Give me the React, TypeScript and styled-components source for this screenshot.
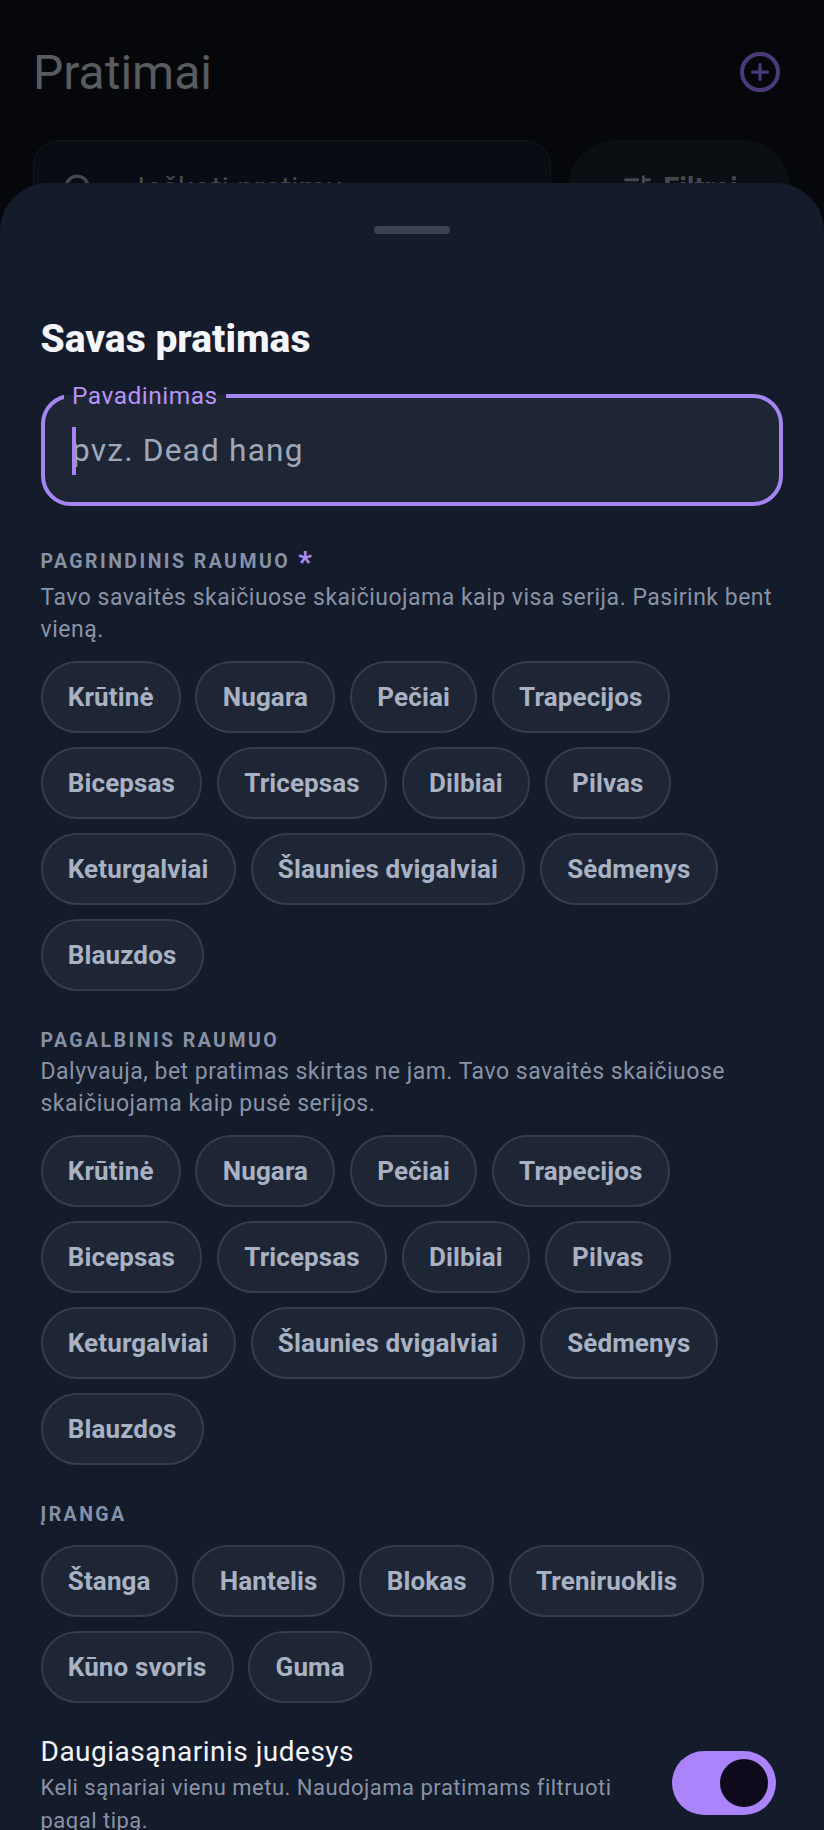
import React from 'react';
import styled, { createGlobalStyle } from 'styled-components';
import { Plus, Search } from 'lucide-react';
import { MdTune } from 'react-icons/md';

const muscles = [
  'Krūtinė',
  'Nugara',
  'Pečiai',
  'Trapecijos',
  'Bicepsas',
  'Tricepsas',
  'Dilbiai',
  'Pilvas',
  'Keturgalviai',
  'Šlaunies dvigalviai',
  'Sėdmenys',
  'Blauzdos',
];

const equipment = ['Štanga', 'Hantelis', 'Blokas', 'Treniruoklis', 'Kūno svoris', 'Guma'];

const GlobalStyle = createGlobalStyle`
  html, body {
    margin: 0;
    padding: 0;
    background: #06070a;
  }
  * {
    box-sizing: border-box;
  }
`;

const Screen = styled.div`
  position: relative;
  width: 824px;
  height: 1830px;
  overflow: hidden;
  background: #06070a;
  font-family: Roboto, 'Noto Sans', sans-serif;
`;

const Backdrop = styled.div`
  padding: 42px 32px 0 33px;
`;

const Header = styled.div`
  display: flex;
  justify-content: space-between;
  align-items: center;
  height: 60px;
  margin-bottom: 38px;
`;

const PageTitle = styled.h1`
  margin: 0;
  font-size: 48px;
  font-weight: 400;
  color: #5a5b5f;
`;

const AddButton = styled.div`
  display: flex;
  align-items: center;
  justify-content: center;
  width: 40px;
  height: 40px;
  margin-right: 12px;
  border: 4px solid #4a3a7c;
  border-radius: 50%;
  color: #4a3a7c;
`;

const SearchRow = styled.div`
  display: flex;
  gap: 17px;
`;

const SearchBox = styled.div`
  display: flex;
  align-items: center;
  gap: 42px;
  width: 518px;
  height: 96px;
  padding: 0 28px;
  border: 1px solid #12151c;
  border-radius: 26px;
  background: #090c12;
  color: #45474d;
  font-size: 31px;
  white-space: nowrap;
`;

const FilterButton = styled.div`
  display: flex;
  align-items: center;
  justify-content: center;
  gap: 8px;
  width: 222px;
  height: 96px;
  border-radius: 48px;
  background: #0b0e13;
  color: #45474d;
  font-size: 29px;
  font-weight: 700;
`;

const Sheet = styled.div`
  position: absolute;
  top: 183px;
  left: 0;
  right: 0;
  bottom: 0;
  padding: 43px 41px 0 40.5px;
  border-radius: 48px 48px 0 0;
  background: #141b2b;
`;

const Handle = styled.div`
  width: 76px;
  height: 8px;
  margin: 0 auto 83px;
  border-radius: 4px;
  background: #3a4150;
`;

const SheetTitle = styled.h2`
  margin: 0 0 33px;
  font-size: 39px;
  line-height: 44px;
  font-weight: 800;
  color: #f4f6fc;
`;

const Field = styled.div`
  position: relative;
  height: 112px;
  padding: 29px 27.5px 0;
  margin-bottom: 40px;
  border: 4px solid #a585f0;
  border-radius: 30px;
  background: #1e2636;
`;

const FieldLabel = styled.span`
  position: absolute;
  top: -16px;
  left: 19.5px;
  padding: 0 8px;
  font-size: 24.5px;
  line-height: 28px;
  letter-spacing: 0.5px;
  color: #b794f6;
  background: linear-gradient(to bottom, #141b2b 45%, #1e2636 45%);
`;

const Placeholder = styled.div`
  position: relative;
  font-size: 31.6px;
  line-height: 48px;
  letter-spacing: 1.2px;
  color: #a0a8b8;
`;

const Caret = styled.span`
  position: absolute;
  top: 0;
  left: 0;
  width: 4px;
  height: 48px;
  background: #a585f0;
`;

const SectionLabel = styled.div<{ $mb?: number }>`
  display: flex;
  align-items: flex-start;
  gap: 8px;
  min-height: 31px;
  padding-top: 1px;
  margin-bottom: ${(p) => p.$mb ?? 0}px;
  font-size: 19.5px;
  line-height: 30px;
  font-weight: 700;
  letter-spacing: 2.45px;
  color: #8791a6;
`;

const Required = styled.span`
  height: 35px;
  font-size: 30px;
  line-height: 30px;
  color: #a98cf6;
`;

const Hint = styled.p`
  margin: 0;
  font-size: 23px;
  line-height: 32px;
  letter-spacing: 0.5px;
  color: #8a93a6;
`;

const ToggleHint = styled(Hint)`
  font-size: 22px;
  line-height: 33px;
`;

const Chips = styled.div<{ $mb: number }>`
  display: flex;
  flex-wrap: wrap;
  gap: 14px 14.6px;
  margin: 15px 0 ${(p) => p.$mb}px;
`;

const Chip = styled.div`
  display: flex;
  align-items: center;
  height: 72px;
  padding: 0 25.3px;
  border: 2px solid #353d4d;
  border-radius: 36px;
  background: #1e2636;
  font-size: 26px;
  font-weight: 700;
  letter-spacing: 0.12px;
  color: #a9b2c3;
`;

const ToggleRow = styled.div`
  display: flex;
  align-items: center;
  justify-content: space-between;
`;

const ToggleText = styled.div`
  width: 590px;
`;

const ToggleTitle = styled.div`
  font-size: 28px;
  line-height: 38px;
  letter-spacing: 0.5px;
  color: #f4f6fc;
`;

const Toggle = styled.div`
  display: flex;
  align-items: center;
  justify-content: flex-end;
  width: 104px;
  height: 64px;
  margin: 0 7px 4px 0;
  padding-right: 8px;
  border-radius: 32px;
  background: #ab84fb;
`;

const Thumb = styled.div`
  width: 48px;
  height: 48px;
  border-radius: 50%;
  background: #0e0a1c;
`;

const ChipList: React.FC<{ items: string[]; mb: number }> = ({ items, mb }) => (
  <Chips $mb={mb}>
    {items.map((item) => (
      <Chip key={item}>{item}</Chip>
    ))}
  </Chips>
);

export default function App() {
  return (
    <Screen>
      <GlobalStyle />
      <Backdrop>
        <Header>
          <PageTitle>Pratimai</PageTitle>
          <AddButton>
            <Plus size={26} strokeWidth={3} />
          </AddButton>
        </Header>
        <SearchRow>
          <SearchBox>
            <Search size={33} strokeWidth={2.4} />
            Ieškoti pratimų...
          </SearchBox>
          <FilterButton>
            <MdTune size={35} />
            Filtrai
          </FilterButton>
        </SearchRow>
      </Backdrop>
      <Sheet>
        <Handle />
        <SheetTitle>Savas pratimas</SheetTitle>
        <Field>
          <FieldLabel>Pavadinimas</FieldLabel>
          <Placeholder>
            <Caret />
            pvz. Dead hang
          </Placeholder>
        </Field>
        <SectionLabel>
          PAGRINDINIS RAUMUO <Required>*</Required>
        </SectionLabel>
        <Hint>Tavo savaitės skaičiuose skaičiuojama kaip visa serija. Pasirink bent vieną.</Hint>
        <ChipList items={muscles} mb={34} />
        <SectionLabel>PAGALBINIS RAUMUO</SectionLabel>
        <Hint>Dalyvauja, bet pratimas skirtas ne jam. Tavo savaitės skaičiuose skaičiuojama kaip pusė serijos.</Hint>
        <ChipList items={muscles} mb={34} />
        <SectionLabel $mb={2}>ĮRANGA</SectionLabel>
        <ChipList items={equipment} mb={30} />
        <ToggleRow>
          <ToggleText>
            <ToggleTitle>Daugiasąnarinis judesys</ToggleTitle>
            <ToggleHint>Keli sąnariai vienu metu. Naudojama pratimams filtruoti pagal tipą.</ToggleHint>
          </ToggleText>
          <Toggle>
            <Thumb />
          </Toggle>
        </ToggleRow>
      </Sheet>
    </Screen>
  );
}
